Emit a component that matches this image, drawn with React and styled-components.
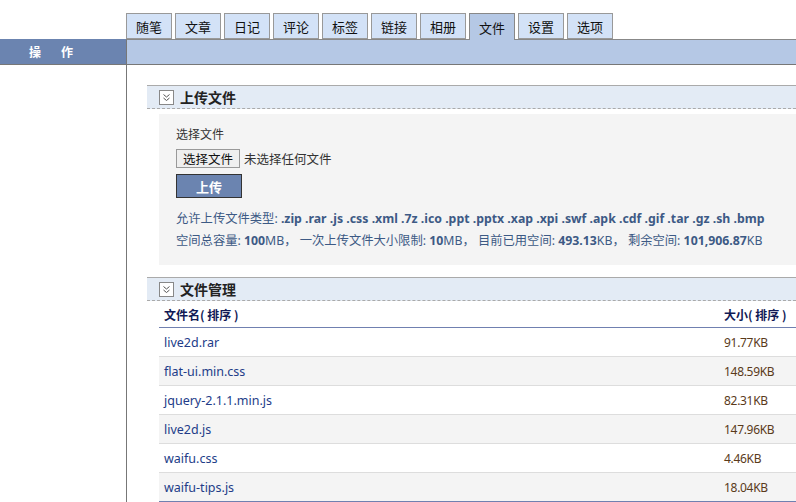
import React from "react";
import styled, { createGlobalStyle } from "styled-components";

const Global = createGlobalStyle`
  html, body { margin: 0; padding: 0; background: #fff; }
  body { font-family: "Segoe UI", "Noto Sans", "Noto Sans CJK SC", sans-serif; font-size: 12px; color: #333; }
`;

const Page = styled.div`
  width: 796px;
  height: 502px;
  overflow: hidden;
`;

const TabsRow = styled.div`
  display: flex;
  align-items: flex-end;
  gap: 3px;
  padding-left: 126px;
  height: 39px;
  box-sizing: border-box;
`;

const Tab = styled.div`
  width: 44px;
  height: ${(p) => (p.$active ? "26px" : "24px")};
  margin-bottom: ${(p) => (p.$active ? "-1px" : "0")};
  border: 1px solid ${(p) => (p.$active ? "#888" : "#999")};
  border-bottom: ${(p) => (p.$active ? "none" : "1px solid #999")};
  background: ${(p) => (p.$active ? "#b5c8e5" : "#d3e2f7")};
  display: flex;
  align-items: center;
  justify-content: center;
  font-size: 13px;
  color: #111;
  position: relative;
  z-index: 1;
  font-family: "Noto Sans CJK SC", sans-serif;
`;

const HeaderBar = styled.div`
  display: flex;
  height: 26px;
  box-sizing: border-box;
  border-bottom: 1px solid #777;
`;

const HeaderLeft = styled.div`
  width: 126px;
  background: #6b84b0;
  color: #fff;
  font-weight: bold;
  font-size: 12px;
  display: flex;
  align-items: center;
  padding-left: 29px;
  box-sizing: border-box;
  letter-spacing: 20px;
  font-family: "Noto Sans CJK SC", sans-serif;
`;

const HeaderRight = styled.div`
  flex: 1;
  background: #b5c8e5;
  border-left: 1px solid #777;
  border-top: 1px solid #888;
`;

const Main = styled.div`
  display: flex;
  height: 437px;
`;

const Sidebar = styled.div`
  width: 126px;
  border-right: 1px solid #777;
`;

const Content = styled.div`
  flex: 1;
  padding: 20px 0 0 20px;
  display: flex;
  flex-direction: column;
`;

const SectionHead = styled.div`
  height: 24px;
  flex-shrink: 0;
  box-sizing: border-box;
  border-top: 1px solid #aaa;
  border-bottom: 1px dashed #aaa;
  background: #e3ebf5;
  display: flex;
  align-items: center;
  padding-left: 12px;
  gap: 6px;
  font-family: "Noto Sans CJK SC", sans-serif;
  font-weight: bold;
  font-size: 14px;
  color: #222;
`;

const Toggle = styled.span`
  width: 13px;
  height: 13px;
  border: 1px solid #888;
  background: #fff;
  display: flex;
  align-items: center;
  justify-content: center;
`;

const SectionBody = styled.div`
  margin: 5px 0 12px 12px;
  background: #f4f4f4;
  padding: 12px 17px 13px;
  display: flex;
  flex-direction: column;
  flex-shrink: 0;
`;

const Label = styled.div`
  height: 17px;
  line-height: 17px;
  color: #333;
`;

const FileRow = styled.div`
  display: flex;
  align-items: center;
  gap: 4px;
  margin-top: 6px;
  height: 19px;
  font-size: 12.5px;
`;

const FileButton = styled.span`
  border: 1px solid #999;
  background: #efefef;
  height: 17px;
  padding: 0 6px;
  display: flex;
  align-items: center;
  font-size: 12.5px;
  color: #111;
`;

const UploadButton = styled.div`
  margin-top: 6px;
  width: 64px;
  height: 22px;
  border: 1px solid #333;
  background: #6b84b0;
  color: #fff;
  font-weight: bold;
  font-size: 13px;
  display: flex;
  align-items: center;
  justify-content: center;
`;

const Info = styled.div`
  color: #3d5a85;
  margin-top: ${(p) => p.$mt || 0}px;
  line-height: 22px;
  font-size: 12.3px;
  white-space: nowrap;
  & b { font-weight: bold; }
`;

const Table = styled.div`
  margin: 0 0 0 12px;
  display: flex;
  flex-direction: column;
  border-bottom: 2px solid #7080b0;
`;

const Row = styled.div`
  display: flex;
  align-items: center;
  flex-shrink: 0;
  height: ${(p) => (p.$head ? 26 : 28)}px;
  background: ${(p) => (p.$alt ? "#f4f4f4" : "#fff")};
  border-bottom: 1px solid ${(p) => (p.$head ? "#7080b0" : "#ddd")};
  padding-left: 5px;
  font-size: 12.5px;
  &:last-child { border-bottom: none; }
`;

const HeadCell = styled.div`
  font-weight: bold;
  color: #111a55;
  font-family: "Noto Sans CJK SC", sans-serif;
  font-size: 12px;
  ${(p) => (p.$grow ? "flex: 1;" : "width: 72px;")}
`;

const NameCell = styled.div`
  flex: 1;
  color: #223c88;
`;

const SizeCell = styled.div`
  width: 72px;
  font-size: 12px;
  letter-spacing: -0.3px;
  color: #5a3a1a;
`;

const Chev = () => (
  <svg width="9" height="9" viewBox="0 0 9 9">
    <path d="M1.5 1.5 L4.5 4 L7.5 1.5 M1.5 5 L4.5 7.5 L7.5 5" fill="none" stroke="#555" strokeWidth="1" />
  </svg>
);

const tabs = ["随笔", "文章", "日记", "评论", "标签", "链接", "相册", "文件", "设置", "选项"];
const files = [
  ["live2d.rar", "91.77KB"],
  ["flat-ui.min.css", "148.59KB"],
  ["jquery-2.1.1.min.js", "82.31KB"],
  ["live2d.js", "147.96KB"],
  ["waifu.css", "4.46KB"],
  ["waifu-tips.js", "18.04KB"],
];

export default function App() {
  return (
    <Page>
      <Global />
      <TabsRow>
        {tabs.map((t) => (
          <Tab key={t} $active={t === "文件"}>{t}</Tab>
        ))}
      </TabsRow>
      <HeaderBar>
        <HeaderLeft>操作</HeaderLeft>
        <HeaderRight />
      </HeaderBar>
      <Main>
        <Sidebar />
        <Content>
          <SectionHead>
            <Toggle><Chev /></Toggle>
            上传文件
          </SectionHead>
          <SectionBody>
            <Label>选择文件</Label>
            <FileRow>
              <FileButton>选择文件</FileButton>
              <span>未选择任何文件</span>
            </FileRow>
            <UploadButton>上传</UploadButton>
            <Info $mt={10}>
              允许上传文件类型: <b>.zip .rar .js .css .xml .7z .ico .ppt .pptx .xap .xpi .swf .apk .cdf .gif .tar .gz .sh .bmp</b>
            </Info>
            <Info>
              空间总容量: <b>100</b>MB， 一次上传文件大小限制: <b>10</b>MB， 目前已用空间: <b>493.13</b>KB， 剩余空间: <b>101,906.87</b>KB
            </Info>
          </SectionBody>
          <SectionHead>
            <Toggle><Chev /></Toggle>
            文件管理
          </SectionHead>
          <Table>
            <Row $head>
              <HeadCell $grow>文件名( 排序 )</HeadCell>
              <HeadCell>大小( 排序 )</HeadCell>
            </Row>
            {files.map(([n, s], i) => (
              <Row key={n} $alt={i % 2 === 1}>
                <NameCell>{n}</NameCell>
                <SizeCell>{s}</SizeCell>
              </Row>
            ))}
          </Table>
        </Content>
      </Main>
    </Page>
  );
}
